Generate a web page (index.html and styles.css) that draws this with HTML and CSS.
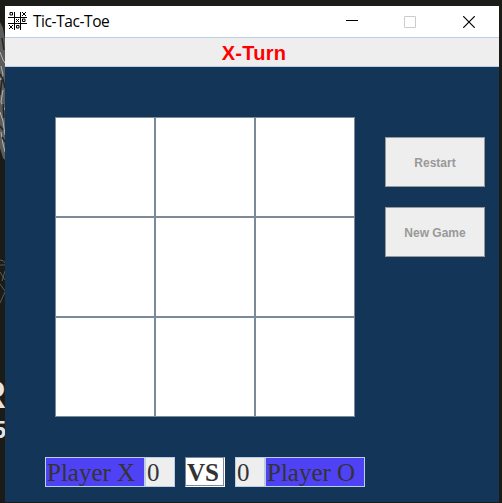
FILE: index.html
```html
<!DOCTYPE html>
<html lang="en">
<head>
<meta charset="utf-8">
<title>Tic-Tac-Toe</title>
<link rel="stylesheet" href="styles.css">
</head>
<body>
<div class="desktop">
  <div class="wallpaper">
    <svg class="texture" width="5" height="503" viewBox="0 0 5 503" fill="none">
      <path fill="#5c5c5c" d="M0 22L3 28L5 40V160L3 158L0 148Z"/>
      <path stroke="#b4b4b4" d="M0 52l3 8 2 3M1 66l2 9-3 5M3 90l-2 12 4 8M0 112l3 9 2 14M1 132l2 12 2 8"/>
      <path stroke="#242424" stroke-width="1.5" d="M2 38l2 12M0 74l3 5 2 9M2 80l-2 15M3 104l1 14M0 126l3 4M5 142l-3-5"/>
      <path stroke="#77776f" stroke-width=".7" d="M0 260q4 0 5 3M0 265h5M0 272l5 8M5 271l-3 10M0 284l5 7M5 292l-5 11"/>
    </svg>
    <span class="letter letter-large">R</span>
    <span class="letter letter-small">5</span>
  </div>
  <div class="window">
    <header class="titlebar">
      <svg class="app-icon" width="20" height="20" viewBox="0 0 20 20" fill="none" stroke="#000">
        <path d="M6.5 1v18M12.5 1v18M0 6.5h19M0 12.5h19"/>
        <path d="M2 1.5h2.5v2.5H2zM14.5 8h2.5v2.5h-2.5zM8.5 14.5H11V17H8.500z"/>
        <path d="M14 1l4 4M18 1l-4 4M8 8l3 3M11 8l-3 3M1 14l4 4M5 14l-4 4"/>
      </svg>
      <h1 class="title">Tic-Tac-Toe</h1>
      <div class="controls">
        <svg width="12" height="12" viewBox="0 0 12 12" stroke="#000"><path d="M0 5.500h12"/></svg>
        <svg width="12" height="12" viewBox="0 0 12 12" fill="none" stroke="#ccc"><path d="M.5 .5h11v11H.5z"/></svg>
        <svg width="12" height="12" viewBox="0 0 12 12" stroke="#000" stroke-width="1.2"><path d="M.2 .2l11.6 11.6M11.8 .2L.2 11.8"/></svg>
      </div>
    </header>
    <div class="status">X-Turn</div>
    <main class="game">
      <div class="play">
        <div class="board">
          <div class="cell"></div><div class="cell"></div><div class="cell"></div>
          <div class="cell"></div><div class="cell"></div><div class="cell"></div>
          <div class="cell"></div><div class="cell"></div><div class="cell"></div>
        </div>
        <div class="actions">
          <button class="action" disabled>Restart</button>
          <button class="action" disabled>New Game</button>
        </div>
      </div>
      <div class="scores">
        <div class="side">
          <span class="player">Player X</span><span class="score">0</span>
        </div>
        <div class="versus">VS</div>
        <div class="side">
          <span class="score">0</span><span class="player">Player O</span>
        </div>
      </div>
    </main>
  </div>
</div>
</body>
</html>
```
FILE: styles.css
```css
* {
  box-sizing: border-box;
}

body {
  margin: 0;
  overflow: hidden;
}

.desktop {
  display: flex;
  width: 502px;
  height: 503px;
  background: #1b1b18;
}

.wallpaper {
  position: relative;
  flex: none;
  width: 5px;
  height: 503px;
  overflow: hidden;
}

.texture {
  display: block;
}

.letter {
  position: absolute;
  color: #e4e4e4;
  font-family: "Liberation Sans", sans-serif;
  font-weight: 700;
  line-height: 1;
}

.letter-large {
  top: 376px;
  right: -1px;
  font-size: 38px;
}

.letter-small {
  top: 418px;
  right: -1px;
  font-size: 24px;
}

.window {
  display: flex;
  flex-direction: column;
  width: 494px;
  height: 496px;
  margin-top: 6px;
}

.titlebar {
  display: flex;
  align-items: center;
  flex: none;
  height: 31px;
  padding: 0 24px 0 3px;
  background: #fff;
}

.app-icon {
  flex: none;
  margin-bottom: 1px;
}

.title {
  margin: 0 0 2px 5px;
  color: #000;
  font: 400 15.5px/20px "Open Sans", sans-serif;
  letter-spacing: -0.42px;
}

.controls {
  display: flex;
  gap: 47px;
  margin-left: auto;
}

.controls svg:first-child {
  margin: -1px -1px 1px 0;
}

.status {
  flex: none;
  height: 30px;
  padding-left: 4px;
  border: solid #b8cfe5;
  border-width: 1px 0;
  background: #eee;
  color: #f00;
  font: 700 20px/30px "Liberation Sans", sans-serif;
  letter-spacing: 0.3px;
  text-align: center;
}

.game {
  flex: 1;
  padding: 50px 14px 0 40px;
  background: #133557;
}

.play {
  display: flex;
  gap: 30px;
  padding-left: 10px;
}

.board {
  display: grid;
  grid-template-columns: repeat(3, 100px);
  grid-template-rows: repeat(3, 100px);
}

.cell {
  border: 1px solid #7a8a99;
  background: #fff;
}

.actions {
  display: flex;
  flex-direction: column;
  gap: 20px;
  padding-top: 20px;
}

.action {
  width: 100px;
  height: 50px;
  padding: 1px 0 0;
  border: 1px solid #999;
  border-radius: 0;
  background: #eee;
  color: #999;
  font: 700 12px/14px "Liberation Sans", sans-serif;
}

.scores {
  display: flex;
  gap: 10px;
  margin-top: 40px;
  color: #333;
  font: 25px/30px "Liberation Serif", serif;
}

.side {
  display: flex;
}

.player,
.score {
  height: 30px;
  padding-left: 1px;
  border: 1px solid #b8cfe5;
  white-space: nowrap;
}

.player {
  width: 100px;
  background: #4f42f5;
}

.score {
  width: 30px;
  background: #eee;
}

.versus {
  width: 40px;
  height: 30px;
  padding-left: 1px;
  border: 1px solid #fff;
  border-top-color: #7a8a99;
  border-left-color: #7a8a99;
  background: #fff;
  box-shadow: inset -1px -1px #7a8a99;
  font-weight: 700;
}
```
